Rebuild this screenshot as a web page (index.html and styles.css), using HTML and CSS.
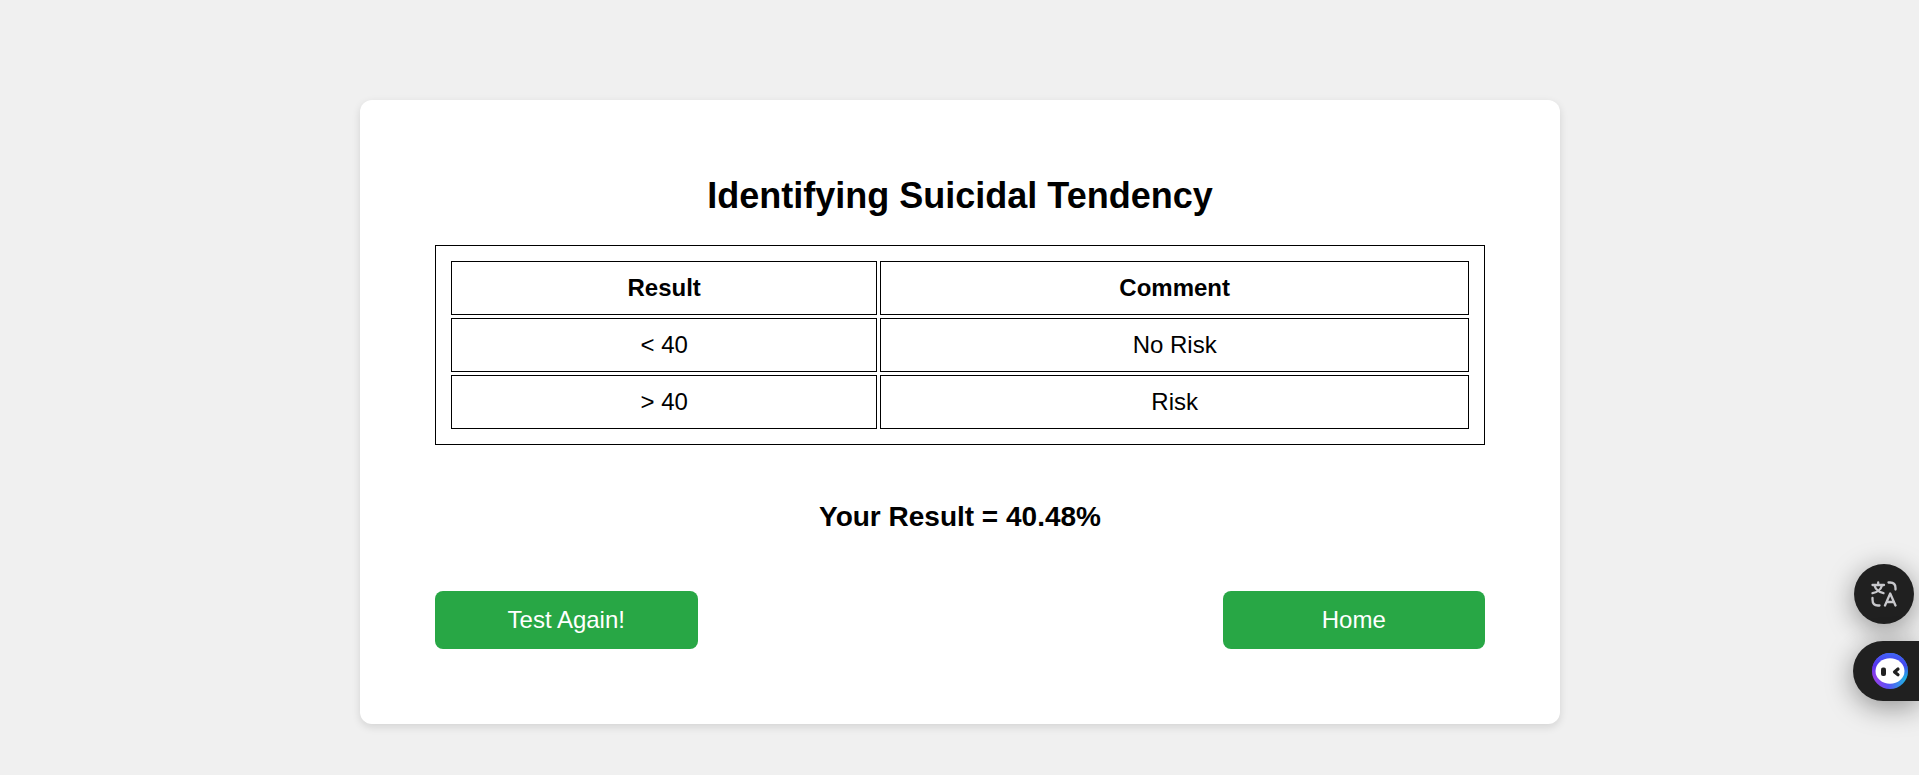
FILE: index.html
```html
<!DOCTYPE html>
<html lang="en">
<head>
  <meta charset="utf-8">
  <meta name="viewport" content="width=device-width, initial-scale=1">
  <title>Identifying Suicidal Tendency</title>
  <link rel="stylesheet" href="styles.css">
</head>
<body>
  <main class="card">
    <h1 class="title">Identifying Suicidal Tendency</h1>
    <table class="scale">
      <thead>
        <tr><th class="scale-result" scope="col">Result</th><th scope="col">Comment</th></tr>
      </thead>
      <tbody>
        <tr><td>&lt; 40</td><td>No Risk</td></tr>
        <tr><td>&gt; 40</td><td>Risk</td></tr>
      </tbody>
    </table>
    <h2 class="result">Your Result = 40.48%</h2>
    <div class="actions">
      <button class="btn" type="button">Test Again!</button>
      <button class="btn" type="button">Home</button>
    </div>
  </main>

  <aside class="tools">
    <button class="tool tool-translate" type="button" aria-label="Translate">
      <svg width="26" height="26" viewBox="0 0 26 26" fill="none" stroke="#c8c8cc" stroke-width="2.300" stroke-linecap="round" stroke-linejoin="round">
        <path d="M1.5 4H13M7.2 1.5V4M3.5 4.5C4.5 8 7.5 11 12.5 12.2M11 4.5C10 8 7 11 1.5 12.2"/>
        <path d="M17.500 1.500H19Q24.500 1.500 24.500 7V8.500"/>
        <path d="M1.500 17V18.500Q1.500 24.500 7 24.500H8.500"/>
        <path d="M14 24.500L19.200 12.500L24.500 24.500M15.500 21H23"/>
      </svg>
    </button>
    <button class="tool tool-assistant" type="button" aria-label="Assistant">
      <svg width="36" height="36" viewBox="0 0 36 36">
        <defs>
          <linearGradient id="ring" x1="0" y1="0.700" x2="1" y2="0.700">
            <stop offset="0" stop-color="#a03ce8"/>
            <stop offset="0.450" stop-color="#5a50f5"/>
            <stop offset="1" stop-color="#18bfe0"/>
          </linearGradient>
          <linearGradient id="ringTop" x1="0" y1="0" x2="0" y2="1">
            <stop offset="0" stop-color="#4068f8"/>
            <stop offset="0.350" stop-color="#4a30f0" stop-opacity="0.800"/>
            <stop offset="0.700" stop-color="#4a30f0" stop-opacity="0"/>
          </linearGradient>
        </defs>
        <circle cx="18" cy="18" r="18" fill="url(#ring)"/>
        <circle cx="18" cy="18" r="18" fill="url(#ringTop)"/>
        <ellipse cx="18" cy="18" rx="14.500" ry="12.800" fill="#fff"/>
        <rect x="9" y="14.500" width="5" height="8.500" rx="2" fill="#202020"/>
        <path d="M26 16L22.500 19L26 21.800" fill="none" stroke="#202020" stroke-width="3.200" stroke-linecap="round" stroke-linejoin="round"/>
      </svg>
    </button>
  </aside>
</body>
</html>
```
FILE: styles.css
```css
* {
  box-sizing: border-box;
}

body {
  margin: 0;
  padding: 100px 23px 48px 24px;
  background: #f0f0f0;
  color: #000;
  font: 24px/28px "Liberation Sans", Arial, sans-serif;
}

.card {
  max-width: 1200px;
  margin: 0 auto;
  padding: 75px;
  background: #fff;
  border-radius: 12px;
  box-shadow: 0 3px 8px rgba(0, 0, 0, 0.12);
  text-align: center;
}

.title {
  margin: 0 0 29px;
  font-size: 36px;
  line-height: 41px;
}

.scale {
  width: 100%;
  padding: 12px;
  border: 1px solid #000;
  border-spacing: 3px;
}

.scale th,
.scale td {
  padding: 12px;
  border: 1px solid #000;
}

.scale-result {
  width: 42%;
}

.result {
  margin: 56px 0 58px;
  font-size: 28px;
  line-height: 32px;
}

.actions {
  display: flex;
  justify-content: space-between;
}

.btn {
  width: 25%;
  padding: 15px;
  border: 0;
  border-radius: 8px;
  background: #28a745;
  color: #fff;
  font: inherit;
  cursor: pointer;
}

.tools {
  position: fixed;
  right: 0;
  bottom: 74px;
  display: flex;
  flex-direction: column;
  align-items: flex-end;
  gap: 17px;
}

.tool {
  display: flex;
  align-items: center;
  justify-content: center;
  height: 60px;
  padding: 0;
  border: 0;
  background: #202020;
  box-shadow: 0 6px 28px rgba(0, 0, 0, 0.4);
  cursor: pointer;
}

.tool-translate {
  width: 60px;
  margin-right: 5px;
  border-radius: 50%;
}

.tool-assistant {
  width: 66px;
  padding-left: 8px;
  border-radius: 30px 0 0 30px;
}
```
